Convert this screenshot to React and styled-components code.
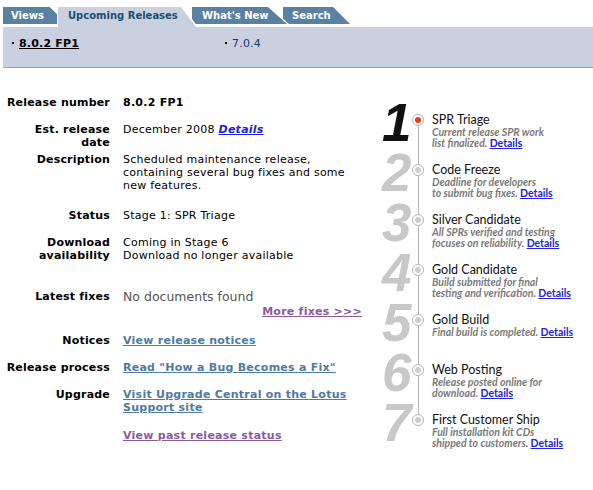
import React from 'react';
import styled, { createGlobalStyle } from 'styled-components';

const GlobalStyle = createGlobalStyle`
  body {
    margin: 0;
    background: #fff;
    color: #000;
    font-family: "DejaVu Sans", Verdana, sans-serif;
    font-size: 11px;
  }
`;

// Tabs
const TabBar = styled.div`
  display: flex;
  align-items: flex-start;
  height: 20px;
  padding: 7px 0 0 3px;
`;

const shapes = {
  cut: 'polygon(0 0, calc(100% - 7px) 0, 100% 7px, 100% 100%, 0 100%)',
  slant: (s) => `polygon(0 0, calc(100% - ${s}px) 0, 100% 100%, 0 100%)`,
};

const TabEdge = styled.div`
  position: relative;
  z-index: ${(p) => p.$z};
  margin-left: ${(p) => p.$overlap || 0}px;
  margin-right: ${(p) => p.$gap || 0}px;
  padding-right: ${(p) => (p.$slant ? 2 : 0)}px;
  background: #fff;
  clip-path: ${(p) => (p.$slant ? shapes.slant(p.$slant) : shapes.cut)};
`;

const TabFace = styled.div`
  box-sizing: border-box;
  width: ${(p) => p.$width}px;
  height: ${(p) => (p.$active ? 20 : 17)}px;
  padding-left: ${(p) => p.$pad}px;
  line-height: 17px;
  font-size: 10px;
  font-weight: bold;
  white-space: nowrap;
  color: ${(p) => (p.$active ? '#1b4f72' : '#fff')};
  background: ${(p) => (p.$active ? '#c9d0df' : '#5a80a2')};
  clip-path: ${(p) => (p.$slant ? shapes.slant(p.$slant) : shapes.cut)};
`;

const Panel = styled.div`
  margin-left: 3px;
  height: 30px;
  padding: 10px 0 0 9px;
  background: #c9d0df;
  border-bottom: 1px solid #93a6b3;
  display: flex;
`;

const PanelItem = styled.a`
  display: block;
  width: ${(p) => p.$width || 'auto'};
  line-height: 13px;
  color: ${(p) => (p.$current ? '#000' : '#26366e')};
  font-weight: ${(p) => (p.$current ? 'bold' : 'normal')};
  letter-spacing: 0.2px;
  text-decoration: none;

  span {
    text-decoration: ${(p) => (p.$current ? 'underline' : 'none')};
  }

  &::before {
    content: '';
    display: inline-block;
    width: 2px;
    height: 2px;
    margin: 0 5px 2px 0;
    background: #000;
    vertical-align: middle;
  }
`;

// Main body
const Main = styled.div`
  display: flex;
  padding-top: 28px;
`;

const Details = styled.div`
  width: 362px;
  flex: none;
`;

const Row = styled.div`
  display: grid;
  grid-template-columns: 110px 239px;
  column-gap: 13px;
  line-height: 13px;
  margin-bottom: ${(p) => (p.$gap === undefined ? 14 : p.$gap)}px;
`;

const Label = styled.div`
  text-align: right;
  font-weight: bold;
  white-space: nowrap;
  letter-spacing: 0.2px;
  padding-top: ${(p) => p.$drop || 0}px;
`;

const Value = styled.div`
  font-weight: ${(p) => (p.$bold ? 'bold' : 'normal')};
  letter-spacing: 0.25px;
`;

const EmptyNote = styled.div`
  font-size: 12.5px;
  line-height: 15px;
  letter-spacing: 0;
  color: #555;
`;

const MoreLine = styled.div`
  text-align: right;
  margin-top: 1px;
`;

const TextLink = styled.a`
  color: ${(p) => (p.$visited ? '#8b5a9d' : '#4f7aa2')};
  font-weight: bold;
  text-decoration: underline;
`;

const ItalicLink = styled.a`
  color: #1d1ddc;
  font-weight: bold;
  font-style: italic;
  text-decoration: underline;
`;

// Release timeline
const Timeline = styled.div`
  margin-left: 18px;
  padding-top: 14px;
`;

const Step = styled.div`
  display: grid;
  grid-template-columns: 30px 16px 1fr;
  height: 50px;
`;

const StageNumber = styled.div`
  font-family: "Liberation Sans", Arial, sans-serif;
  font-weight: bold;
  font-style: italic;
  font-size: 53px;
  line-height: 40px;
  margin-top: -7px;
  padding-left: 2px;
  color: ${(p) => (p.$current ? '#111' : '#c8c8c8')};
`;

const Marker = styled.div`
  display: flex;
  flex-direction: column;
  align-items: center;
`;

const Track = styled.div`
  width: 1px;
  background: #b9b9b9;
  height: ${(p) => (p.$grow ? 'auto' : '4px')};
  flex: ${(p) => (p.$grow ? 1 : 'none')};
  visibility: ${(p) => (p.$hidden ? 'hidden' : 'visible')};
`;

const Dot = styled.div`
  flex: none;
  box-sizing: border-box;
  width: 12px;
  height: 12px;
  border-radius: 50%;
  border: 1px solid #b4b4b4;
  background: #fff;
  display: flex;
  align-items: center;
  justify-content: center;

  &::after {
    content: '';
    width: 6px;
    height: 6px;
    border-radius: 50%;
    background: ${(p) => (p.$current ? '#ee3a16' : '#cdcdcd')};
  }
`;

const StepText = styled.div`
  padding: 3px 0 0 6px;
  font-family: Lato, "Open Sans", sans-serif;
  white-space: nowrap;
`;

const StepTitle = styled.div`
  font-size: 12.5px;
  line-height: 14px;
  color: #111;
`;

const StepDesc = styled.div`
  font-size: 10.5px;
  line-height: 11px;
  font-weight: bold;
  font-style: italic;
  color: #7a7a7a;
`;

const StepLink = styled.a`
  color: #2323d8;
  font-style: normal;
  text-decoration: underline;
`;

const steps = [
  { title: 'SPR Triage', lines: ['Current release SPR work', 'list finalized.'] },
  { title: 'Code Freeze', lines: ['Deadline for developers', 'to submit bug fixes.'] },
  { title: 'Silver Candidate', lines: ['All SPRs verified and testing', 'focuses on reliability.'] },
  { title: 'Gold Candidate', lines: ['Build submitted for final', 'testing and verification.'] },
  { title: 'Gold Build', lines: ['Final build is completed.'] },
  { title: 'Web Posting', lines: ['Release posted online for', 'download.'] },
  { title: 'First Customer Ship', lines: ['Full installation kit CDs', 'shipped to customers.'] },
];

function Tabs() {
  return (
    <TabBar>
      <TabEdge $z={4} $gap={1}>
        <TabFace $width={54} $pad={8}>Views</TabFace>
      </TabEdge>
      <TabEdge $z={3} $slant={15}>
        <TabFace $active $width={138} $pad={10} $slant={15}>Upcoming Releases</TabFace>
      </TabEdge>
      <TabEdge $z={2} $slant={19} $overlap={-6}>
        <TabFace $width={95} $pad={10} $slant={19}>What's New</TabFace>
      </TabEdge>
      <TabEdge $z={1} $slant={17} $overlap={-6}>
        <TabFace $width={67} $pad={9} $slant={17}>Search</TabFace>
      </TabEdge>
    </TabBar>
  );
}

export default function App() {
  return (
    <>
      <GlobalStyle />
      <Tabs />
      <Panel>
        <PanelItem href="#" $current $width="213px"><span>8.0.2 FP1</span></PanelItem>
        <PanelItem href="#"><span>7.0.4</span></PanelItem>
      </Panel>

      <Main>
        <Details>
          <Row>
            <Label>Release number</Label>
            <Value $bold>8.0.2 FP1</Value>
          </Row>
          <Row $gap={4}>
            <Label>Est. release<br />date</Label>
            <Value>December 2008 <ItalicLink href="#">Details</ItalicLink></Value>
          </Row>
          <Row $gap={17}>
            <Label>Description</Label>
            <Value>
              Scheduled maintenance release,<br />
              containing several bug fixes and some<br />
              new features.
            </Value>
          </Row>
          <Row>
            <Label>Status</Label>
            <Value>Stage 1: SPR Triage</Value>
          </Row>
          <Row $gap={27}>
            <Label>Download<br />availability</Label>
            <Value>Coming in Stage 6<br />Download no longer available</Value>
          </Row>
          <Row $gap={16}>
            <Label $drop={1}>Latest fixes</Label>
            <Value>
              <EmptyNote>No documents found</EmptyNote>
              <MoreLine><TextLink href="#" $visited>More fixes &gt;&gt;&gt;</TextLink></MoreLine>
            </Value>
          </Row>
          <Row>
            <Label>Notices</Label>
            <Value><TextLink href="#">View release notices</TextLink></Value>
          </Row>
          <Row>
            <Label>Release process</Label>
            <Value><TextLink href="#">Read "How a Bug Becomes a Fix"</TextLink></Value>
          </Row>
          <Row $gap={15}>
            <Label>Upgrade</Label>
            <Value><TextLink href="#">Visit Upgrade Central on the Lotus<br />Support site</TextLink></Value>
          </Row>
          <Row>
            <Label />
            <Value><TextLink href="#" $visited>View past release status</TextLink></Value>
          </Row>
        </Details>

        <Timeline>
          {steps.map((s, i) => (
            <Step key={s.title}>
              <StageNumber $current={i === 0}>{i + 1}</StageNumber>
              <Marker>
                <Track $hidden={i === 0} />
                <Dot $current={i === 0} />
                <Track $grow $hidden={i === steps.length - 1} />
              </Marker>
              <StepText>
                <StepTitle>{s.title}</StepTitle>
                <StepDesc>
                  {s.lines.map((line, j) => (
                    <div key={j}>
                      {line}
                      {j === s.lines.length - 1 && (
                        <> <StepLink href="#">Details</StepLink></>
                      )}
                    </div>
                  ))}
                </StepDesc>
              </StepText>
            </Step>
          ))}
        </Timeline>
      </Main>
    </>
  );
}
